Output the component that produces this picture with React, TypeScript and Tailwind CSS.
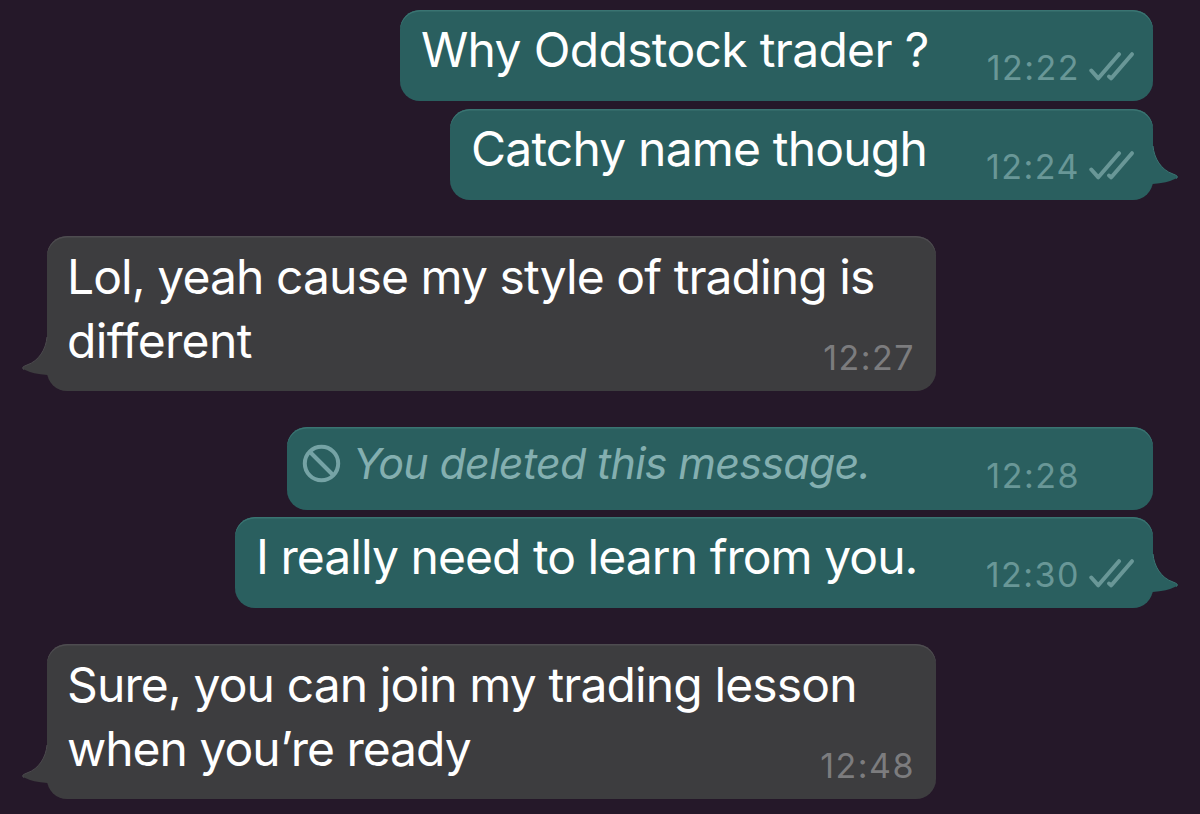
import React from 'react';
import clsx from 'clsx';

interface Line {
  text: string;
  className: string;
}

interface Message {
  id: number;
  outgoing?: boolean;
  deleted?: boolean;
  tail?: boolean;
  lines: Line[];
  time: string;
  className: string;
}

const MESSAGES: Message[] = [
  {
    id: 1,
    outgoing: true,
    lines: [{ text: 'Why Oddstock trader ?', className: 'tracking-[-0.68px]' }],
    time: '12:22',
    className: 'w-[753px] h-[91px]',
  },
  {
    id: 2,
    outgoing: true,
    tail: true,
    lines: [{ text: 'Catchy name though', className: 'tracking-[-0.82px]' }],
    time: '12:24',
    className: 'mt-2 w-[703px] h-[91px]',
  },
  {
    id: 3,
    tail: true,
    lines: [
      { text: 'Lol, yeah cause my style of trading is', className: 'tracking-[-0.92px]' },
      { text: 'different', className: 'tracking-[-0.65px]' },
    ],
    time: '12:27',
    className: 'mt-9 w-[889px] h-[155px]',
  },
  {
    id: 4,
    outgoing: true,
    deleted: true,
    lines: [{ text: 'You deleted this message.', className: 'tracking-[-0.7px]' }],
    time: '12:28',
    className: 'mt-9 w-[866px] h-[83px]',
  },
  {
    id: 5,
    outgoing: true,
    tail: true,
    lines: [{ text: 'I really need to learn from you.', className: 'tracking-[-0.95px]' }],
    time: '12:30',
    className: 'mt-[7px] w-[918px] h-[91px]',
  },
  {
    id: 6,
    tail: true,
    lines: [
      { text: 'Sure, you can join my trading lesson', className: 'tracking-[-0.88px]' },
      { text: 'when you’re ready', className: 'tracking-[-1.02px]' },
    ],
    time: '12:48',
    className: 'mt-9 w-[889px] h-[155px]',
  },
];

function Ticks() {
  return (
    <svg width="46" height="32" viewBox="0 0 46 32" fill="none" stroke="currentColor" strokeWidth="4" strokeLinecap="round" strokeLinejoin="round">
      <path d="M2.3 20.5L9.3 28.3L30 4.2" />
      <path d="M20 26.5L22.3 28.3L43 4.2" />
    </svg>
  );
}

function Tail({ outgoing }: { outgoing?: boolean }) {
  return (
    <svg
      width="30"
      height="44"
      viewBox="0 0 30 44"
      className={clsx(
        'absolute bottom-[14px]',
        outgoing ? '-right-[26px] text-[#2a5f5f]' : '-left-[26px] -scale-x-100 text-[#3d3d3f]'
      )}
    >
      <path d="M0 0H4V4C5 16 12 28 24 32Q31 34.5 27 36.5Q18 41 3.5 42H0Z" fill="currentColor" />
      <path
        d="M4 4C5 16 12 28 24 32Q31 34.5 27 36.5"
        fill="none"
        strokeWidth="1"
        className={outgoing ? 'stroke-[#3a7472]' : 'stroke-[#4b494d]'}
      />
    </svg>
  );
}

function Bubble({ message }: { message: Message }) {
  const { outgoing, deleted, tail, lines, time, className } = message;
  const first = lines.slice(0, -1);
  const last = lines[lines.length - 1];

  return (
    <div
      className={clsx(
        'relative flex flex-col rounded-[20px] whitespace-nowrap',
        outgoing
          ? 'self-end bg-[#2a5f5f] pr-[18px] shadow-[inset_0_1.5px_0_#3a7472]'
          : 'self-start bg-[#3d3d3f] pr-[21px] shadow-[inset_0_1.5px_0_#4e4c50]',
        deleted && 'pl-[15px] pt-2.5 pb-[14px]',
        !deleted && outgoing && 'pl-[21px] pt-2 pb-[13px]',
        !outgoing && 'pl-5 pt-[9px] pb-[13px]',
        className
      )}
    >
      {first.map(line => (
        <p key={line.text} className={clsx('text-[48px] leading-[64px] text-white', line.className)}>
          {line.text}
        </p>
      ))}
      <div className="flex flex-1 items-end justify-between">
        {deleted ? (
          <div className="flex self-start items-center gap-3 text-[#84afb0]">
            <svg width="39" height="39" viewBox="0 0 39 39" fill="none" stroke="currentColor" strokeWidth="4" className="text-[#75a3a5]">
              <circle cx="19.5" cy="19.5" r="16.7" />
              <path d="M8 8L31 31" />
            </svg>
            <p className={clsx('text-[43px] leading-[52px] italic', last.className)}>{last.text}</p>
          </div>
        ) : (
          <p className={clsx('self-start text-[48px] leading-[64px] text-white', last.className)}>{last.text}</p>
        )}
        <div className={clsx('flex items-end', outgoing ? 'text-[#699797]' : 'text-[#7c7c7e]')}>
          <span className="text-[34px] leading-10 tracking-[1.5px]">{time}</span>
          {outgoing && (
            <span className={clsx('ml-[9px] mb-1.5', deleted && 'invisible')}>
              <Ticks />
            </span>
          )}
        </div>
      </div>
      {tail && <Tail outgoing={outgoing} />}
    </div>
  );
}

export default function App() {
  return (
    <main className="flex h-[814px] w-[1200px] flex-col overflow-hidden bg-[#251829] pt-[10px] pr-[47px] pl-[47px] font-['Inter',sans-serif]">
      {MESSAGES.map(message => (
        <Bubble key={message.id} message={message} />
      ))}
    </main>
  );
}
